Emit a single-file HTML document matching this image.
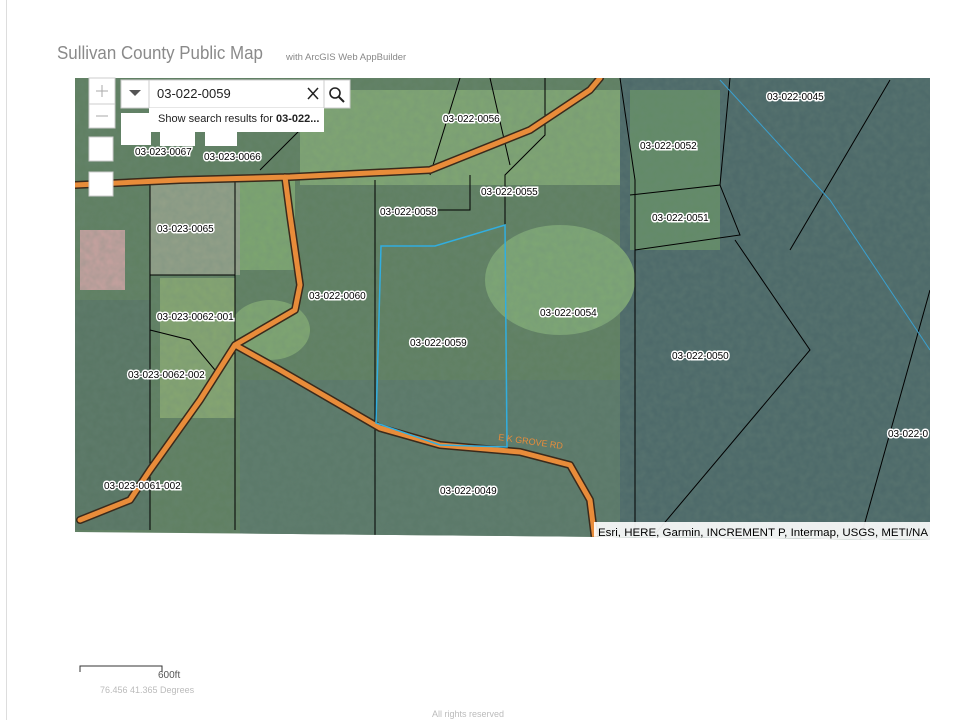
<!DOCTYPE html>
<html><head><meta charset="utf-8"><style>
body{margin:0;width:960px;height:720px;background:#fff;position:relative;overflow:hidden;font-family:"Liberation Sans",sans-serif}
.t{position:absolute;left:57px;top:43px;font-size:18px;color:#8a8a8a;transform:scaleX(0.94);transform-origin:left}
.s{position:absolute;left:286px;top:52px;font-size:9.5px;color:#888}
.lbl{font-family:"Liberation Sans",sans-serif;font-size:10px;fill:#000;stroke:#fff;stroke-width:3px;paint-order:stroke}
</style></head><body>
<div style="position:absolute;left:6px;top:0;width:1px;height:720px;background:#ddd"></div>
<div class="t">Sullivan County Public Map</div>
<div class="s">with ArcGIS Web AppBuilder</div>
<svg style="position:absolute;left:0;top:0" width="960" height="720">
<defs><filter id="n"><feTurbulence type="fractalNoise" baseFrequency="0.15" numOctaves="2" seed="3"/><feColorMatrix values="0 0 0 0 0.15  0 0 0 0 0.25  0 0 0 0 0.2  0 0 0 0.35 0"/><feComposite in2="SourceGraphic" operator="in"/></filter>
<clipPath id="c"><polygon points="75,78 930,78 930,540 75,532"/></clipPath></defs>
<g clip-path="url(#c)">
<rect x="75" y="78" width="855" height="462" fill="#5f7f60"/>
<rect x="620" y="78" width="310" height="462" fill="#4b6768"/>
<rect x="150" y="180" width="90" height="95" fill="#93a088"/>
<rect x="160" y="278" width="75" height="140" fill="#86a670"/>
<rect x="240" y="180" width="55" height="90" fill="#7da66f"/>
<rect x="300" y="90" width="320" height="95" fill="#80a672"/>
<ellipse cx="560" cy="280" rx="75" ry="55" fill="#7ea774"/>
<ellipse cx="270" cy="330" rx="40" ry="30" fill="#7fa670"/>
<rect x="630" y="90" width="90" height="160" fill="#628a66"/>
<rect x="80" y="230" width="45" height="60" fill="#c9a2a0"/>
<rect x="75" y="300" width="75" height="230" fill="#587563"/>
<rect x="240" y="380" width="380" height="160" fill="#5a7868"/>
<rect x="75" y="78" width="855" height="462" fill="#fff" filter="url(#n)"/>
<g fill="none" stroke="#000" stroke-width="1">
<path d="M150 180V530M235 180V530M150 275H235M375 180V540M430 175L460 78M490 78L510 165M470 175L470 210H380M505 225L505 175L545 135V78M620 78L635 180V540M630 195L720 185L730 78M635 250L740 235L720 185M735 240L810 350L650 540M790 250L890 80M930 290L860 540M150 330L190 340L215 370M195 130L300 130L260 170"/>
</g>
<g fill="none" stroke-linecap="round" stroke-linejoin="round">
<path d="M75 185L180 180L290 177L430 170L530 130L590 90L600 78M285 177L290 215L300 285L295 310L235 345L200 400L150 470L130 500L80 520M235 345L280 370L380 428L440 445L520 452L570 465L590 500L595 540" stroke="#3a2a1c" stroke-width="8"/>
<path d="M75 185L180 180L290 177L430 170L530 130L590 90L600 78M285 177L290 215L300 285L295 310L235 345L200 400L150 470L130 500L80 520M235 345L280 370L380 428L440 445L520 452L570 465L590 500L595 540" stroke="#e88c3a" stroke-width="5"/>
</g>
<path d="M381 246L435 246L505 225L507 447L440 445L376 423Z" fill="none" stroke="#31aee0" stroke-width="1.5"/>
<path d="M720 80L830 200L930 350" fill="none" stroke="#3aa0d0" stroke-width="1"/>
<g class="lbl">
<text x="135" y="155">03-023-0067</text><text x="204" y="160">03-023-0066</text>
<text x="443" y="122">03-022-0056</text><text x="380" y="215">03-022-0058</text>
<text x="481" y="195">03-022-0055</text><text x="157" y="232">03-023-0065</text>
<text x="309" y="299">03-022-0060</text><text x="157" y="320">03-023-0062-001</text>
<text x="128" y="378">03-023-0062-002</text><text x="410" y="346">03-022-0059</text>
<text x="540" y="316">03-022-0054</text><text x="672" y="359">03-022-0050</text>
<text x="640" y="149">03-022-0052</text><text x="652" y="221">03-022-0051</text>
<text x="767" y="100">03-022-0045</text><text x="888" y="437">03-022-0</text>
<text x="440" y="494">03-022-0049</text><text x="104" y="489">03-023-0061-002</text>
</g>
<text x="498" y="440" font-size="9" fill="#e88c3a" transform="rotate(8 498 440)">E K GROVE RD</text>
<rect x="594" y="522" width="336" height="18" fill="#fff" opacity=".9"/>
<text x="598" y="536" font-size="11" fill="#000" textLength="330" lengthAdjust="spacingAndGlyphs">Esri, HERE, Garmin, INCREMENT P, Intermap, USGS, METI/NA</text>
</g>
<g fill="#fff" stroke="#ccc"><rect x="89" y="78" width="26" height="26"/><rect x="89" y="104" width="26" height="24"/><rect x="89" y="137" width="24" height="24"/><rect x="89" y="172" width="24" height="24"/>
<rect x="121" y="80" width="28" height="28"/><rect x="149" y="80" width="175" height="28"/><rect x="324" y="80" width="26" height="28"/>
<rect x="149" y="108" width="175" height="24" stroke="none"/><rect x="121" y="113" width="30" height="32" stroke="none"/><rect x="160" y="128" width="35" height="18" stroke="none"/><rect x="205" y="128" width="32" height="18" stroke="none"/></g>
<path d="M102 85V97M96 91H108M96 116H108" stroke="#aaa"/>
<path d="M129 90L141 90L135 96Z" fill="#555"/>
<text x="157" y="98" font-size="13" fill="#222">03-022-0059</text>
<path d="M308 88L318 99M318 88L308 99" stroke="#222" stroke-width="1.5"/>
<circle cx="335" cy="93" r="5" fill="none" stroke="#222" stroke-width="1.6"/><path d="M339 97L344 102" stroke="#222" stroke-width="2"/>
<text x="158" y="122" font-size="11" fill="#222">Show search results for <tspan font-weight="bold">03-022...</tspan></text>
<path d="M80 672V666H162V672" fill="none" stroke="#333" stroke-width="1"/>
<text x="158" y="678" font-size="10" fill="#555">600ft</text>
<text x="100" y="693" font-size="9" fill="#bbb">76.456 41.365 Degrees</text>
<text x="432" y="717" font-size="9" fill="#bbb">All rights reserved</text>
</svg>
</body></html>
